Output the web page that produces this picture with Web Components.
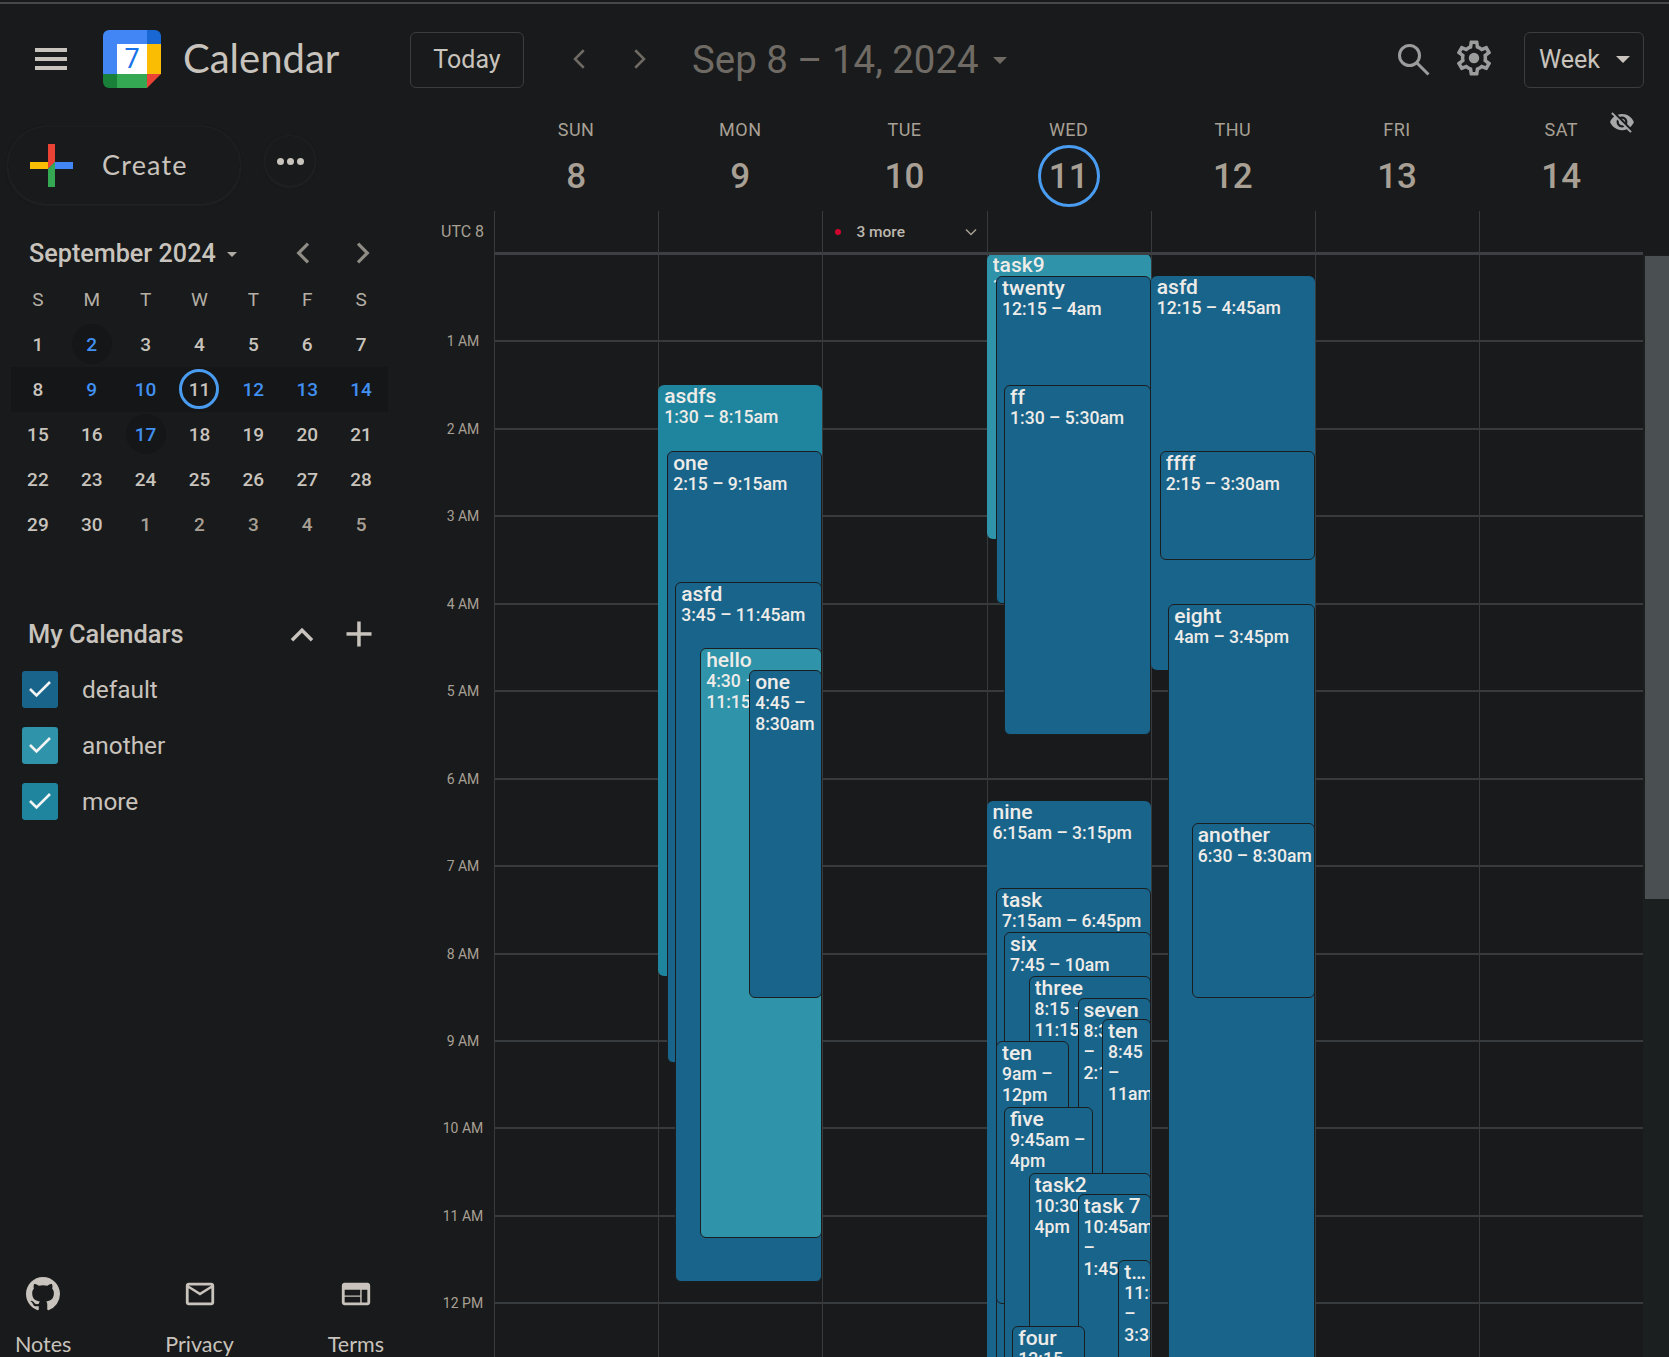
<!DOCTYPE html>
<html>
<head>
<meta charset="utf-8">
<title>Calendar</title>
<style>
    html, body { margin: 0; height: 100%; background: #181a1b; overflow: hidden; }
    body { font-family: Roboto, "Liberation Sans", sans-serif; color: #c8c3bc; }
</style>
</head>
<body>
<cal-app></cal-app>

<script>
const HOUR = 87.45;
const DEFAULT = '#19648a';
const ANOTHER = '#2f93a9';
const MORE = '#1f859e';

// inset = distance from the column's left line, in px
const events = [
    { day: 1, start: 1.5, end: 8.25, inset: 0, color: MORE, title: 'asdfs', time: '1:30 – 8:15am' },
    { day: 1, start: 2.25, end: 9.25, inset: 9, color: DEFAULT, title: 'one', time: '2:15 – 9:15am', nested: true },
    { day: 1, start: 3.75, end: 11.75, inset: 17, color: DEFAULT, title: 'asfd', time: '3:45 – 11:45am', nested: true },
    { day: 1, start: 4.5, end: 11.25, inset: 42, color: ANOTHER, title: 'hello', time: '4:30 – 11:15am', nested: true },
    { day: 1, start: 4.75, end: 8.5, inset: 91, color: DEFAULT, title: 'one', time: '4:45 – 8:30am', nested: true },

    { day: 3, start: 0, end: 3.25, inset: 0, color: ANOTHER, title: 'task9', time: '12 – 3:15am' },
    { day: 3, start: 0.25, end: 4, inset: 9.5, color: DEFAULT, title: 'twenty', time: '12:15 – 4am', nested: true },
    { day: 3, start: 1.5, end: 5.5, inset: 17.5, color: DEFAULT, title: 'ff', time: '1:30 – 5:30am', nested: true },
    { day: 3, start: 6.25, end: 15.25, inset: 0, color: DEFAULT, title: 'nine', time: '6:15am – 3:15pm' },
    { day: 3, start: 7.25, end: 18.75, inset: 9.5, color: DEFAULT, title: 'task', time: '7:15am – 6:45pm', nested: true },
    { day: 3, start: 7.75, end: 10, inset: 17.5, color: DEFAULT, title: 'six', time: '7:45 – 10am', nested: true },
    { day: 3, start: 8.25, end: 11.25, inset: 42, color: DEFAULT, title: 'three', time: '8:15 – 11:15am', nested: true },
    { day: 3, start: 8.5, end: 14.25, inset: 91, color: DEFAULT, title: 'seven', time: '8:30am – 2:15pm', nested: true },
    { day: 3, start: 8.75, end: 11, inset: 115.5, color: DEFAULT, title: 'ten', time: '8:45 – 11am', nested: true },
    { day: 3, start: 9, end: 12, inset: 9.5, width: 72.5, color: DEFAULT, title: 'ten', time: '9am – 12pm', nested: true },
    { day: 3, start: 9.75, end: 16, inset: 17.5, width: 88.5, color: DEFAULT, title: 'five', time: '9:45am – 4pm', nested: true },
    { day: 3, start: 10.5, end: 16, inset: 42, color: DEFAULT, title: 'task2', time: '10:30am – 4pm', nested: true },
    { day: 3, start: 10.75, end: 13.75, inset: 91, color: DEFAULT, title: 'task 7', time: '10:45am – 1:45pm', nested: true },
    { day: 3, start: 11.5, end: 15.5, inset: 131.7, color: DEFAULT, title: 'task8', time: '11:30am – 3:30pm', nested: true },
    { day: 3, start: 12.25, end: 15, inset: 25.7, width: 72.4, color: DEFAULT, title: 'four', time: '12:15 – 3pm', nested: true },

    { day: 4, start: 0.25, end: 4.75, inset: 0, color: DEFAULT, title: 'asfd', time: '12:15 – 4:45am' },
    { day: 4, start: 2.25, end: 3.5, inset: 9, color: DEFAULT, title: 'ffff', time: '2:15 – 3:30am', nested: true },
    { day: 4, start: 4, end: 15.75, inset: 17.5, color: DEFAULT, title: 'eight', time: '4am – 3:45pm', nested: true },
    { day: 4, start: 6.5, end: 8.5, inset: 41, color: DEFAULT, title: 'another', time: '6:30 – 8:30am', nested: true },
];

const days = [
    ['SUN', 8], ['MON', 9], ['TUE', 10], ['WED', 11], ['THU', 12], ['FRI', 13], ['SAT', 14],
];

const hours = ['1 AM', '2 AM', '3 AM', '4 AM', '5 AM', '6 AM', '7 AM', '8 AM', '9 AM', '10 AM', '11 AM', '12 PM', '1 PM'];

const icons = {
    gear: 'M19.43 12.98c.04-.32.07-.64.07-.98 0-.34-.03-.66-.07-.98l2.11-1.65c.19-.15.24-.42.12-.64l-2-3.46c-.09-.16-.26-.25-.44-.25-.06 0-.12.01-.17.03l-2.49 1c-.52-.4-1.08-.73-1.69-.98l-.38-2.65C14.46 2.18 14.25 2 14 2h-4c-.25 0-.46.18-.49.42l-.38 2.65c-.61.25-1.17.59-1.69.98l-2.49-1c-.06-.02-.12-.03-.18-.03-.17 0-.34.09-.43.25l-2 3.46c-.13.22-.07.49.12.64l2.11 1.65c-.04.32-.07.65-.07.98 0 .33.03.66.07.98l-2.11 1.65c-.19.15-.24.42-.12.64l2 3.46c.09.16.26.25.44.25.06 0 .12-.01.17-.03l2.49-1c.52.4 1.08.73 1.69.98l.38 2.65c.03.24.24.42.49.42h4c.25 0 .46-.18.49-.42l.38-2.65c.61-.25 1.17-.59 1.69-.98l2.49 1c.06.02.12.03.18.03.17 0 .34-.09.43-.25l2-3.46c.12-.22.07-.49-.12-.64l-2.11-1.65zm-1.98-1.71c.04.31.05.52.05.73 0 .21-.02.43-.05.73l-.14 1.13.89.7 1.08.84-.7 1.21-1.27-.51-1.04-.42-.9.68c-.43.32-.84.56-1.25.73l-1.06.43-.16 1.13-.2 1.35h-1.4l-.19-1.35-.16-1.13-1.06-.43c-.43-.18-.83-.41-1.23-.71l-.91-.7-1.06.43-1.27.51-.7-1.21 1.08-.84.89-.7-.14-1.13c-.03-.31-.05-.54-.05-.74s.02-.43.05-.73l.14-1.13-.89-.7-1.08-.84.7-1.21 1.27.51 1.04.42.9-.68c.43-.32.84-.56 1.25-.73l1.06-.43.16-1.13.2-1.35h1.39l.19 1.35.16 1.13 1.06.43c.43.18.83.41 1.23.71l.91.7 1.06-.43 1.27-.51.7 1.21-1.07.85-.89.7.14 1.13zM12 9a3 3 0 1 0 0 6 3 3 0 0 0 0-6z',
    eyeOff: 'M12 7c2.76 0 5 2.24 5 5 0 .65-.13 1.26-.36 1.83l2.92 2.92c1.51-1.26 2.7-2.89 3.43-4.75-1.73-4.39-6-7.5-11-7.5-1.4 0-2.74.25-3.98.7l2.16 2.16C10.74 7.13 11.35 7 12 7zM2 4.27l2.28 2.28.46.46C3.08 8.3 1.78 10.02 1 12c1.73 4.39 6 7.5 11 7.5 1.55 0 3.03-.3 4.38-.84l.42.42L19.73 22 21 20.73 3.27 3 2 4.27zM7.53 9.8l1.55 1.55c-.05.21-.08.43-.08.65 0 1.66 1.34 3 3 3 .22 0 .44-.03.65-.08l1.55 1.55c-.67.33-1.41.53-2.2.53-2.76 0-5-2.24-5-5 0-.79.2-1.53.53-2.2zm4.31-.78l3.15 3.15.02-.16c0-1.66-1.34-3-3-3l-.17.01z',
    github: 'M8 0C3.58 0 0 3.58 0 8c0 3.54 2.29 6.53 5.47 7.59.4.07.55-.17.55-.38 0-.19-.01-.82-.01-1.49-2.01.37-2.53-.49-2.69-.94-.09-.23-.48-.94-.82-1.13-.28-.15-.68-.52-.01-.53.63-.01 1.08.58 1.23.82.72 1.21 1.87.87 2.33.66.07-.52.28-.87.51-1.07-1.78-.2-3.64-.89-3.64-3.95 0-.87.31-1.59.82-2.15-.08-.2-.36-1.02.08-2.12 0 0 .67-.21 2.2.82.64-.18 1.32-.27 2-.27.68 0 1.36.09 2 .27 1.53-1.04 2.2-.82 2.2-.82.44 1.1.16 1.92.08 2.12.51.56.82 1.27.82 2.15 0 3.07-1.87 3.75-3.65 3.95.29.25.54.73.54 1.48 0 1.07-.01 1.93-.01 2.2 0 .21.15.46.55.38A8.013 8.013 0 0016 8c0-4.42-3.58-8-8-8z',
    mail: 'M20 4H4c-1.1 0-1.99.9-1.99 2L2 18c0 1.1.9 2 2 2h16c1.1 0 2-.9 2-2V6c0-1.1-.9-2-2-2zm0 14H4V8l8 5 8-5v10zm-8-7L4 6h16l-8 5z',
    web: 'M20 4H4c-1.1 0-1.99.9-1.99 2L2 18c0 1.1.9 2 2 2h16c1.1 0 2-.9 2-2V6c0-1.1-.9-2-2-2zm-5 14H4v-4h11v4zm0-5H4V9h11v4zm5 5h-4V9h4v9z',
};

const svgIcon = (name, size, viewBox = 24) =>
    `<svg width="${size}" height="${size}" viewBox="0 0 ${viewBox} ${viewBox}" fill="currentColor"><path d="${icons[name]}"/></svg>`;

const chevron = (points, size, width) =>
    `<svg width="${size}" height="${size}" viewBox="0 0 24 24" fill="none" stroke="currentColor" stroke-width="${width}"><polyline points="${points}"/></svg>`;

class AppHeader extends HTMLElement {
    connectedCallback() {
        this.attachShadow({ mode: 'open' }).innerHTML = `
            <style>
                :host { display: flex; align-items: center; height: 110px; padding-right: 25px; }
                .brand { display: flex; align-items: center; width: 410px; flex: none; }
                .menu { width: 32px; height: 22px; margin: 0 36px 0 35px; display: flex; flex-direction: column; justify-content: space-between; }
                .menu i { display: block; height: 4px; background: #c8c3bc; }
                .logo { display: block; width: 58px; height: 58px; margin-right: 22px; }
                .name { font: 400 40px Lato, Roboto, sans-serif; color: #c8c3bc; line-height: 1; margin-top: -2px; }
                button {
                    font: 400 25px Roboto, sans-serif; color: #c8c3bc; background: none;
                    border: 1px solid #3a3e41; border-radius: 6px; height: 56px; padding: 0; margin-top: 1px;
                }
                .today { width: 114px; }
                .nav { display: flex; width: 89px; justify-content: space-between; margin: 0 38px 0 41px; color: #6f6b64; }
                .nav svg { display: block; }
                .range { font-size: 38.4px; color: #6f6b64; white-space: nowrap; }
                .caret { width: 0; height: 0; border: 7px solid transparent; border-top-color: currentColor; border-bottom: 0; }
                .range-caret { color: #6f6b64; margin-left: 14px; margin-top: 2px; }
                .right { margin-left: auto; display: flex; align-items: center; }
                .search, .gear { color: #9c9c9c; display: block; margin-top: 2px; }
                .search { margin-right: 23px; }
                .gear { margin-right: 29px; }
                .week { width: 120px; display: flex; align-items: center; padding: 0 13px 0 14px; justify-content: space-between; }
            </style>
            <div class="brand">
                <div class="menu"><i></i><i></i><i></i></div>
                <svg class="logo" viewBox="0 0 58 58">
                    <path d="M6 0H44V14H14V44H0V6a6 6 0 0 1 6-6z" fill="#4285f4"/>
                    <path d="M44 0h8a6 6 0 0 1 6 6v8H44z" fill="#1967d2"/>
                    <rect x="44" y="14" width="14" height="30" fill="#fbbc04"/>
                    <rect x="14" y="44" width="30" height="14" fill="#34a853"/>
                    <path d="M0 44H14V58H6a6 6 0 0 1-6-6z" fill="#188038"/>
                    <path d="M44 44H58L44 58z" fill="#ea4335"/>
                    <rect x="14" y="14" width="30" height="30" fill="#fff"/>
                    <text x="29" y="38" text-anchor="middle" font-family="Roboto, sans-serif" font-size="27" fill="#1a73e8">7</text>
                </svg>
                <span class="name">Calendar</span>
            </div>
            <button class="today">Today</button>
            <div class="nav">
                ${chevron('15 5 8 12 15 19', 30, 2)}
                ${chevron('9 5 16 12 9 19', 30, 2)}
            </div>
            <span class="range">Sep 8 – 14, 2024</span>
            <div class="caret range-caret"></div>
            <div class="right">
                <svg class="search" width="32" height="32" viewBox="0 0 32 32" fill="none" stroke="currentColor" stroke-width="3"><circle cx="11.5" cy="11.5" r="10"/><line x1="18.5" y1="18.5" x2="30.5" y2="30.5"/></svg>
                <span class="gear">${svgIcon('gear', 42)}</span>
                <button class="week">Week <span class="caret"></span></button>
            </div>
        `;
    }
}

class MiniMonth extends HTMLElement {
    connectedCallback() {
        const weekdays = ['S', 'M', 'T', 'W', 'T', 'F', 'S'];
        const dates = [];
        for (let d = 1; d <= 30; d++) dates.push({ d });
        for (let d = 1; d <= 5; d++) dates.push({ d, other: true });
        const cells = dates.map(({ d, other }) => {
            const classes = [];
            if (other) classes.push('other');
            if ([2, 17].includes(d) && !other) classes.push('has-dot');
            if (!other && d >= 9 && d <= 14 && d !== 11) classes.push('blue');
            if (!other && d === 11) classes.push('today');
            return `<div class="cell ${classes.join(' ')}"><span>${d}</span></div>`;
        }).join('');
        this.attachShadow({ mode: 'open' }).innerHTML = `
            <style>
                :host { display: block; margin-top: 29px; padding-left: 11px; width: 377px; position: relative; }
                .head { display: flex; align-items: center; height: 40px; margin-left: 18px; margin-bottom: 5px; }
                .label { font-size: 25.2px; font-weight: 500; color: #c8c3bc; white-space: nowrap; }
                .caret { width: 0; height: 0; margin-left: 11px; margin-top: 2px; border: 5px solid transparent; border-top-color: #b0aba3; border-bottom: 0; }
                .arrows { margin-left: auto; margin-right: 10px; display: flex; gap: 26px; color: #8f8c86; }
                .arrows svg { display: block; }
                .grid { display: grid; grid-template-columns: repeat(7, 1fr); grid-template-rows: 43.5px; grid-auto-rows: 45px; position: relative; }
                .grid::before { content: ''; position: absolute; left: 0; right: 0; top: 88.5px; height: 45px; background: #141618; }
                .wd, .cell { display: flex; align-items: center; justify-content: center; font-size: 19px; position: relative; }
                .wd { font-weight: 400; color: #b5afa6; }
                .cell { font-weight: 500; color: #c8c3bc; }
                .cell span { width: 40px; height: 40px; display: flex; align-items: center; justify-content: center; border-radius: 50%; box-sizing: border-box; }
                .other { color: #a8a095; }
                .blue { color: #4190f2; }
                .has-dot { color: #4190f2; }
                .has-dot span { background: #141618; }
                .today span { border: 3px solid #4a9cf0; }
            </style>
            <div class="head">
                <span class="label">September 2024</span><span class="caret"></span>
                <div class="arrows">
                    ${chevron('15 5 8 12 15 19', 32, 2.4)}
                    ${chevron('9 5 16 12 9 19', 32, 2.4)}
                </div>
            </div>
            <div class="grid">
                ${weekdays.map(w => `<div class="wd">${w}</div>`).join('')}
                ${cells}
            </div>
        `;
    }
}

class CalCheck extends HTMLElement {
    connectedCallback() {
        this.attachShadow({ mode: 'open' }).innerHTML = `
            <style>
                :host { display: flex; align-items: center; height: 36px; margin-left: 22px; font-size: 24.4px; color: #c8c3bc; }
                .box { width: 36px; height: 37px; border-radius: 3px; margin-right: 24px; background: ${this.getAttribute('color')}; display: flex; align-items: center; justify-content: center; }
            </style>
            <div class="box">
                <svg width="24" height="20" viewBox="0 0 24 20" fill="none" stroke="#f4f4f4" stroke-width="2.6"><polyline points="2,10 8.5,16.5 22,3"/></svg>
            </div>
            <slot></slot>
        `;
    }
}

class CalendarList extends HTMLElement {
    connectedCallback() {
        this.attachShadow({ mode: 'open' }).innerHTML = `
            <style>
                :host { display: block; margin-top: 67.5px; }
                .head { display: flex; align-items: center; height: 40px; margin: 0 0 17px 28px; width: 346px; }
                .label { font-size: 25.4px; font-weight: 500; }
                .tools { margin-left: auto; display: flex; align-items: center; gap: 27px; color: #c8c3bc; }
                .tools svg { display: block; }
                .rows { display: flex; flex-direction: column; gap: 20px; }
            </style>
            <div class="head">
                <span class="label">My Calendars</span>
                <div class="tools">
                    ${chevron('4 17 12 9 20 17', 30, 2.8)}
                    <svg width="30" height="30" viewBox="0 0 30 30" fill="currentColor"><rect x="13.2" y="2.5" width="3.5" height="25"/><rect x="2.5" y="13.2" width="25" height="3.5"/></svg>
                </div>
            </div>
            <div class="rows"><slot></slot></div>
        `;
    }
}

class FootLink extends HTMLElement {
    connectedCallback() {
        const icon = this.getAttribute('icon');
        const view = icon === 'github' ? 16 : 24;
        this.attachShadow({ mode: 'open' }).innerHTML = `
            <style>
                :host { display: flex; flex-direction: column; align-items: center; font: 400 21.5px Lato, Roboto, sans-serif; color: #c8c3bc; }
                svg { display: block; margin-bottom: 20px; color: #c8c3bc; }
                .label { line-height: 26px; }
            </style>
            ${svgIcon(icon, 34, view)}
            <span class="label"><slot></slot></span>
        `;
    }
}

class SideBar extends HTMLElement {
    connectedCallback() {
        this.attachShadow({ mode: 'open' }).innerHTML = `
            <style>
                :host { display: flex; flex-direction: column; width: 411px; flex: none; height: 1243px; box-sizing: border-box; padding-top: 13px; }
                .create-row { display: flex; align-items: flex-start; margin-left: 8px; }
                .create {
                    width: 232px; height: 77px; border-radius: 39px; box-sizing: border-box; padding-left: 22px;
                    display: flex; align-items: center; box-shadow: 0 0 3px #26292b, 0 1px 3px #222527;
                    font: 400 27px Lato, Roboto, sans-serif; letter-spacing: 1.2px; color: #c8c3bc; line-height: 1;
                }
                .create svg { margin-right: 29px; display: block; }
                .create span { margin-top: -2px; }
                .dots {
                    width: 50px; height: 50px; border-radius: 50%; margin: 9px 0 0 25px; box-shadow: 0 0 3px #26292b, 0 1px 3px #222527;
                    display: flex; align-items: center; justify-content: center; gap: 3px;
                }
                .dots i { width: 7px; height: 7px; border-radius: 50%; background: #c8c3bc; }
                .foot { margin-top: auto; width: 369px; margin-left: 15px; display: flex; justify-content: space-between; }
            </style>
            <div class="create-row">
                <div class="create">
                    <svg width="43" height="43" viewBox="0 0 43 43">
                        <polygon points="18,0 25,0 25,18 18,25" fill="#ea4335"/>
                        <polygon points="43,18 43,25 18,25 25,18" fill="#4285f4"/>
                        <polygon points="25,43 18,43 18,25 25,18 25,25" fill="#34a853"/>
                        <polygon points="0,18 18,18 18,25 0,25" fill="#fbbc04"/>
                    </svg>
                    <span>Create</span>
                </div>
                <div class="dots"><i></i><i></i><i></i></div>
            </div>
            <slot></slot>
            <div class="foot"><slot name="foot"></slot></div>
        `;
    }
}

class CalEvent extends HTMLElement {
    connectedCallback() {
        const { top, left, width, height, color, nested } = this.dataset;
        this.attachShadow({ mode: 'open' }).innerHTML = `
            <style>
                :host {
                    position: absolute; top: ${top}px; left: ${left}px; height: ${height}px;
                    ${width ? `width: ${width}px;` : 'right: 0;'}
                    box-sizing: border-box; background: ${color}; border-radius: 6px; overflow: hidden;
                    color: #eeece9; font-weight: 500; padding: 0 0 0 6px;
                    ${nested ? 'border: 1px solid #1b1e20; padding-left: 5px;' : ''}
                }
                .title { font-size: 21px; line-height: 22px; white-space: nowrap; overflow: hidden; text-overflow: ellipsis; padding-right: 4px; }
                .time { font-size: 17.6px; line-height: 21px; }
            </style>
            <div class="title"><slot name="title"></slot></div>
            <div class="time"><slot></slot></div>
        `;
    }
}

class WeekView extends HTMLElement {
    connectedCallback() {
        const heads = days.map(([label, date]) => `
            <div class="head ${date === 11 ? 'now' : ''}">
                <span class="dow">${label}</span>
                <span class="num"><b>${date}</b></span>
            </div>`).join('');
        const alldays = days.map(([, date]) =>
            `<div class="allday">${date === 10 ? `<span class="more"><i></i>3 more<svg width="14" height="14" viewBox="0 0 14 14" fill="none" stroke="#a8a095" stroke-width="1.5"><polyline points="2,4.5 7,9.5 12,4.5"/></svg></span>` : ''}</div>`).join('');
        const cols = days.map((_, i) => `<div class="col" data-day="${i}"></div>`).join('');
        this.attachShadow({ mode: 'open' }).innerHTML = `
            <style>
                :host { display: block; flex: 1; min-width: 0; position: relative; }
                .row { display: grid; grid-template-columns: 83px repeat(7, 164.2px); }
                .heads { height: 97px; }
                .head { display: flex; flex-direction: column; align-items: center; position: relative; }
                .dow { font-size: 18px; color: #a8a095; line-height: 24px; margin-top: 4px; letter-spacing: .5px; }
                .num { font-size: 35px; font-weight: 500; color: #a8a095; width: 62px; height: 62px; margin-top: 3px; box-sizing: border-box; border-radius: 50%; display: flex; align-items: center; justify-content: center; }
                .num b { font-weight: 500; }
                .now .num { border: 3px solid #4a9cf0; }
                .eye { position: absolute; left: 1198px; top: -5px; color: #a8a8a8; }
                .eye svg { display: block; }
                .alldays { height: 44px; width: 1232.4px; }
                .utc { font-size: 16px; color: #a8a095; padding: 11px 0 0 30px; white-space: nowrap; }
                .allday { border-left: 1px solid #383b3e; border-bottom: 3px solid #3c3f43; box-sizing: border-box; position: relative; }
                .more { position: absolute; left: 0; right: 0; top: 12px; font-size: 15.5px; font-weight: 500; color: #bdb7af; display: flex; align-items: center; line-height: 18px; padding-left: 33px; }
                .more i { position: absolute; left: 12px; top: 6px; width: 6px; height: 6px; border-radius: 50%; background: #d0062f; }
                .more svg { margin-left: auto; margin-right: 9px; }
                .body { display: flex; height: 1102px; overflow: hidden; }
                .hours { width: 83px; flex: none; margin-top: -1px; }
                .hour { height: ${HOUR}px; display: flex; align-items: flex-end; justify-content: center; padding-left: 21px; box-sizing: border-box; font-size: 14px; color: #a8a095; white-space: nowrap; }
                .hour span { transform: translateY(50%); line-height: 1; }
                .days {
                    display: grid; grid-template-columns: repeat(7, 164.2px); flex: none; width: 1149.4px; position: relative;
                    background: repeating-linear-gradient(to bottom, transparent 0, transparent ${HOUR - 2}px, #383b3e ${HOUR - 2}px, #383b3e ${HOUR}px);
                }
                .col { position: relative; border-left: 1px solid #383b3e; height: 2100px; }
                .scroll { flex: 1; background: #1c1f20; padding-left: 2px; margin-top: -3px; }
                .thumb { height: 643px; margin-top: 4px; background: #4a5052; }
            </style>
            <div class="row heads"><div></div>${heads}</div>
            <div class="eye">${svgIcon('eyeOff', 26)}</div>
            <div class="row alldays"><div class="utc">UTC 8</div>${alldays}</div>
            <div class="body">
                <div class="hours">
                    ${hours.map(h => `<div class="hour"><span>${h}</span></div>`).join('')}
                </div>
                <div class="days">${cols}</div>
                <div class="scroll"><div class="thumb"></div></div>
            </div>
        `;

        events.forEach(ev => {
            const el = document.createElement('cal-event');
            el.dataset.top = ev.start * HOUR - 0.7;
            el.dataset.left = ev.inset - 1;
            el.dataset.height = (ev.end - ev.start) * HOUR;
            el.dataset.color = ev.color;
            if (ev.width) el.dataset.width = ev.width;
            if (ev.nested) el.dataset.nested = '1';
            el.innerHTML = `<span slot="title">${ev.title}</span>${ev.time}`;
            this.shadowRoot.querySelector(`.col[data-day="${ev.day}"]`).appendChild(el);
        });
    }
}

class CalApp extends HTMLElement {
    connectedCallback() {
        this.attachShadow({ mode: 'open' }).innerHTML = `
            <style>
                :host { display: block; height: 1357px; width: 1669px; overflow: hidden; background: #181a1b; font-family: Roboto, "Liberation Sans", sans-serif; color: #c8c3bc; }
                .strip { height: 2px; margin-top: 2px; background: #46494b; }
                .main { display: flex; }
            </style>
            <div class="strip"></div>
            <app-header></app-header>
            <div class="main">
                <side-bar>
                    <mini-month></mini-month>
                    <calendar-list>
                        <cal-check color="${DEFAULT}">default</cal-check>
                        <cal-check color="${ANOTHER}">another</cal-check>
                        <cal-check color="${MORE}">more</cal-check>
                    </calendar-list>
                    <foot-link slot="foot" icon="github">Notes</foot-link>
                    <foot-link slot="foot" icon="mail">Privacy</foot-link>
                    <foot-link slot="foot" icon="web">Terms</foot-link>
                </side-bar>
                <week-view></week-view>
            </div>
        `;
    }
}

customElements.define('app-header', AppHeader);
customElements.define('mini-month', MiniMonth);
customElements.define('cal-check', CalCheck);
customElements.define('calendar-list', CalendarList);
customElements.define('foot-link', FootLink);
customElements.define('side-bar', SideBar);
customElements.define('cal-event', CalEvent);
customElements.define('week-view', WeekView);
customElements.define('cal-app', CalApp);
</script>
</body>
</html>
